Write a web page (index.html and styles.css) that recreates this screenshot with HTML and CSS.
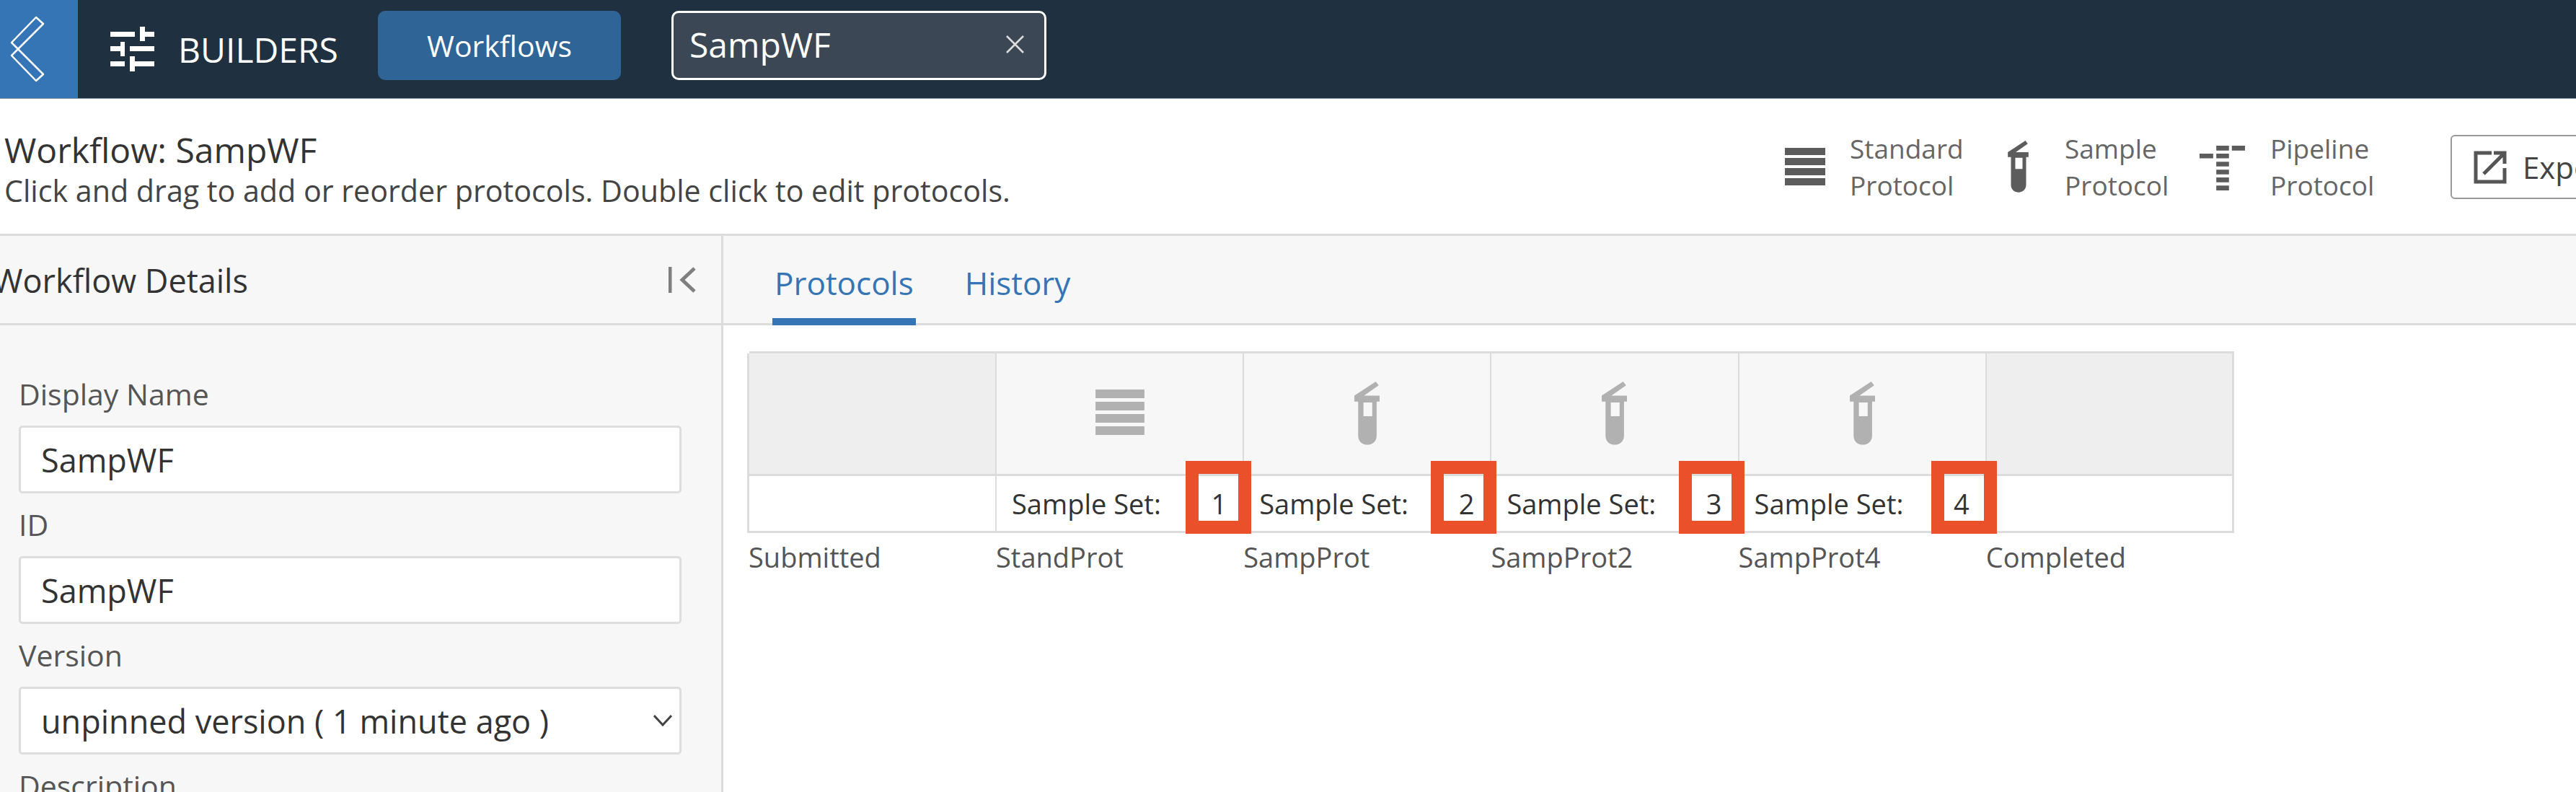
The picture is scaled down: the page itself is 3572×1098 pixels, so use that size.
FILE: index.html
```html
<!DOCTYPE html>
<html lang="en">
<head>
<meta charset="utf-8">
<title>Workflow: SampWF</title>
<link rel="stylesheet" href="styles.css">
</head>
<body>
<header class="topbar">
  <a class="back"><svg width="108" height="136" viewBox="0 0 108 136"><path class="chev" d="M50 24L60 33L25 68L16 59ZM25 68L60 103L50 112L16 77Z"/></svg></a>
  <div class="brand">
    <svg width="62" height="63" viewBox="153 37 62 63"><path class="fill-w" d="M153 44h34v7h-34zM194 37h7v20h-7zM201 44h13v7h-13zM153 64h14v7h-14zM167 58h6v20h-6zM180 64h34v7h-34zM153 85h20v7h-20zM180 78h7v21h-7zM187 85h27v7h-27z"/></svg>
    <span class="brand-name">BUILDERS</span>
  </div>
  <button class="nav-btn">Workflows</button>
  <div class="search"><span>SampWF</span><svg width="25" height="25" viewBox="0 0 25 25"><path class="stroke-x" d="M1 1L24 24M24 1L1 24"/></svg></div>
</header>

<section class="subhead">
  <div class="intro">
    <div class="intro-title">Workflow: SampWF</div>
    <div class="intro-text">Click and drag to add or reorder protocols. Double click to edit protocols.</div>
  </div>
  <div class="legend legend-std">
    <svg class="ic-std" viewBox="0 0 56 52"><path d="M0 0h56v10H0zM0 14h56v10H0zM0 28h56v10H0zM0 42h56v10H0z"/></svg>
    <span>Standard<br>Protocol</span>
  </div>
  <div class="legend legend-samp">
    <svg class="ic-tube" viewBox="0 0 86 216"><path fill-rule="evenodd" d="M0 48L73 0L83 13L33 48H86V68H76V184C76 203 62 215 44 215C27 215 13 203 13 184V68H0ZM31 71V118H61V71Z"/></svg>
    <span>Sample<br>Protocol</span>
  </div>
  <div class="legend legend-pipe">
    <svg class="ic-pipe" viewBox="0 0 190 187"><path d="M70 0h53v20H70zM135 0h55v20h-55zM0 33h57v20H0zM70 33h53v20H70zM70 67h53v20H70zM70 100h53v20H70zM70 133h53v20H70zM70 167h53v20H70z"/></svg>
    <span>Pipeline<br>Protocol</span>
  </div>
  <button class="export">
    <svg width="46" height="46" viewBox="0 0 46 46"><path class="stroke-d" d="M25 3H3V43H43V24M14 32L42 4M28 3H43V18"/></svg>
    <span>Export</span>
  </button>
</section>

<main class="main">
  <aside class="side">
    <div class="side-head">
      <span class="side-title">Workflow Details</span>
      <svg width="38" height="36" viewBox="0 0 38 36"><path class="stroke-g" d="M2 0V36M36 2L19 18L36 34"/></svg>
    </div>
    <form class="side-form">
      <label class="f-label">Display Name</label>
      <div class="f-input">SampWF</div>
      <label class="f-label">ID</label>
      <div class="f-input">SampWF</div>
      <label class="f-label">Version</label>
      <div class="f-input f-select">unpinned version ( 1 minute ago )
        <svg width="26" height="16" viewBox="0 0 26 16"><path class="stroke-c" d="M1 1L13 14L25 1"/></svg>
      </div>
      <label class="f-label">Description</label>
    </form>
  </aside>

  <section class="content">
    <nav class="tabs">
      <a class="tab tab-on">Protocols</a>
      <a class="tab">History</a>
    </nav>
    <div class="canvas">
      <div class="flow">
        <div class="cell cell-end cell-first"></div>
        <div class="cell cell-ic"><svg class="g-std" viewBox="0 0 56 52"><path d="M0 0h56v10H0zM0 14h56v10H0zM0 28h56v10H0zM0 42h56v10H0z"/></svg></div>
        <div class="cell cell-ic"><svg class="g-tube" viewBox="0 0 86 216"><path fill-rule="evenodd" d="M0 48L73 0L83 13L33 48H86V68H76V184C76 203 62 215 44 215C27 215 13 203 13 184V68H0ZM31 71V118H61V71Z"/></svg></div>
        <div class="cell cell-ic"><svg class="g-tube" viewBox="0 0 86 216"><path fill-rule="evenodd" d="M0 48L73 0L83 13L33 48H86V68H76V184C76 203 62 215 44 215C27 215 13 203 13 184V68H0ZM31 71V118H61V71Z"/></svg></div>
        <div class="cell cell-ic"><svg class="g-tube" viewBox="0 0 86 216"><path fill-rule="evenodd" d="M0 48L73 0L83 13L33 48H86V68H76V184C76 203 62 215 44 215C27 215 13 203 13 184V68H0ZM31 71V118H61V71Z"/></svg></div>
        <div class="cell cell-end cell-last"></div>

        <div class="cell cell-set cell-first"></div>
        <div class="cell cell-set"><span>Sample Set:</span><b>1</b></div>
        <div class="cell cell-set"><span>Sample Set:</span><b>2</b></div>
        <div class="cell cell-set"><span>Sample Set:</span><b>3</b></div>
        <div class="cell cell-set"><span>Sample Set:</span><b>4</b></div>
        <div class="cell cell-set cell-last"></div>

        <div class="name">Submitted</div>
        <div class="name">StandProt</div>
        <div class="name">SampProt</div>
        <div class="name">SampProt2</div>
        <div class="name">SampProt4</div>
        <div class="name">Completed</div>

        <i class="mark mark-1"></i><i class="mark mark-2"></i><i class="mark mark-3"></i><i class="mark mark-4"></i>
      </div>
    </div>
  </section>
</main>
</body>
</html>
```
FILE: styles.css
```css
* { box-sizing: border-box; }
html, body { margin: 0; height: 100%; overflow: hidden; }
body { width: 3572px; height: 1098px; background: #fff; color: #333; font-family: "Open Sans", "Noto Sans", sans-serif; font-size: 38px; }

.topbar { height: 137px; background: #1f3041; border-bottom: 1px solid #7f93a8; display: flex; align-items: flex-start; color: #fff; }
.back { width: 108px; height: 136px; background: #3574b5; flex: none; display: block; }
.back svg { display: block; }
.chev { fill: none; stroke: #fff; stroke-width: 2.5; stroke-linejoin: round; }
.fill-w { fill: #fff; }
.brand { display: flex; align-items: center; margin-left: 45px; margin-top: 37px; width: 371px; height: 63px; flex: none; }
.brand svg { flex: none; }
.brand-name { margin-left: 32px; font-size: 48px; line-height: 1; }
.nav-btn { width: 337px; height: 96px; margin-top: 15px; background: #2f6496; border: 0; border-radius: 10px; color: #fff; font: inherit; font-size: 41px; flex: none; }
.search { width: 520px; height: 96px; margin-top: 15px; margin-left: 70px; background: #3b4754; border: 3px solid #fff; border-radius: 10px; display: flex; align-items: center; justify-content: space-between; padding: 0 28px 4px 22px; font-size: 48px; flex: none; }
.stroke-x { fill: none; stroke: #ddd; stroke-width: 2.5; }

.subhead { height: 190px; background: #fff; border-bottom: 3px solid #dcdcdc; display: flex; align-items: flex-start; overflow: hidden; }
.intro { width: 2475px; flex: none; padding: 41px 0 0 6px; }
.intro-title { font-size: 48px; line-height: 60px; color: #333; }
.intro-text { font-size: 41.2px; line-height: 52px; color: #444; }
.legend { display: flex; flex: none; align-items: flex-start; margin-top: 43px; color: #666; font-size: 37px; line-height: 51px; }
.legend svg { fill: #5c5c5c; flex: none; }
.legend-std { width: 309px; }
.ic-std { width: 56px; height: 52px; margin: 25px 34px 0 0; }
.legend-samp { width: 266px; }
.ic-tube { width: 29px; height: 72px; margin: 15px 50px 0 0; }
.legend-pipe { width: 348px; }
.ic-pipe { width: 63px; height: 62px; margin: 22px 35px 0 0; }
.export { width: 400px; flex: none; height: 89px; margin-top: 50px; display: flex; align-items: center; gap: 22px; padding: 0 0 0 30px; background: #fff; border: 2px solid #999; border-radius: 6px; color: #444; font: inherit; font-size: 42px; }
.stroke-d { fill: none; stroke: #555; stroke-width: 5; }

.main { display: flex; height: 771px; }
.side { width: 1003px; flex: none; background: #f7f7f7; border-right: 3px solid #dcdcdc; overflow: hidden; }
.side-head { height: 124px; border-bottom: 3px solid #dcdcdc; display: flex; align-items: center; justify-content: space-between; padding: 0 35px 0 0; }
.side-title { font-size: 45px; margin-left: -10px; margin-top: 2px; color: #333; }
.stroke-g { fill: none; stroke: #808080; stroke-width: 5; }
.side-form { padding: 52px 55px 0 26px; }
.f-label { display: block; height: 87px; padding-top: 2px; font-size: 41px; line-height: 82px; color: #555; }
.f-input { height: 94px; background: #fff; border: 3px solid #ddd; border-radius: 5px; padding: 0 28px; display: flex; align-items: center; justify-content: space-between; font-size: 45px; color: #333; }
.f-select { padding-right: 10px; }
.stroke-c { fill: none; stroke: #444; stroke-width: 3; }

.content { flex: 1; min-width: 0; background: #fff; }
.tabs { height: 124px; background: #f7f7f7; border-bottom: 3px solid #dcdcdc; display: flex; gap: 65px; padding-left: 68px; }
.tab { font-size: 44px; color: #3574b5; height: 124px; padding: 35px 3px 0; }
.tab-on { border-bottom: 10px solid #3574b5; }
.canvas { padding: 36px 0 0 36px; }
.flow { position: relative; width: 2059px; display: grid; grid-template-columns: 343px repeat(5, 1fr); grid-template-rows: 170px 79px auto; border-top: 3px solid #dcdcdc; }
.cell { border-right: 2px solid #dcdcdc; border-bottom: 3px solid #dcdcdc; }
.cell-first { margin-left: -3px; border-left: 3px solid #dcdcdc; }
.cell-ic { background: #f7f7f7; display: flex; align-items: center; justify-content: center; }
.cell-end { background: #eee; }
.cell-last { border-right-width: 3px; }
.cell-set { display: flex; align-items: center; justify-content: space-between; padding: 0 22px 0 21px; font-size: 38px; color: #333; }
.cell-set b { font-weight: 400; }
.g-std { width: 68px; height: 63px; fill: #b1b1b1; margin-bottom: 5px; }
.g-tube { width: 35px; height: 90px; fill: #b1b1b1; margin-bottom: 2px; }
.name { font-size: 38px; color: #555; padding-top: 7px; margin-left: -1px; }
.mark { position: absolute; top: 149px; width: 91px; height: 101px; border: 18px solid #ea502a; }
.mark-1 { left: 605px; }
.mark-2 { left: 945px; }
.mark-3 { left: 1289px; }
.mark-4 { left: 1639px; }
```
